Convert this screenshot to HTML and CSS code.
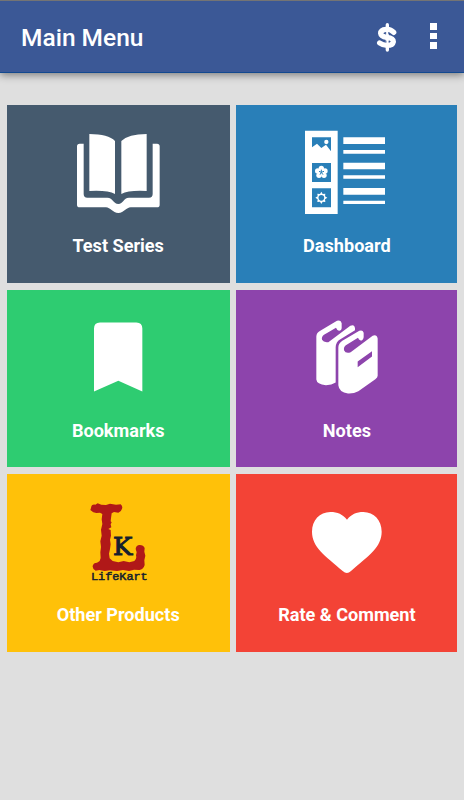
FILE: index.html
```html
<!DOCTYPE html>
<html lang="en">
<head>
    <meta charset="UTF-8">
    <meta name="viewport" content="width=device-width, initial-scale=1.0">
    <title>Main Menu</title>
    <link rel="stylesheet" href="styles.css">
</head>
<body>
    <header class="toolbar">
        <h1>Main Menu</h1>
        <button class="dollar" aria-label="Purchase">
            <svg width="22" height="32" viewBox="0 0 66 96">
                <path d="M53 31Q44 21 31 22Q14 23 14 34Q15 44 32 46Q52 48 52 59Q50 70 33 70Q20 70 11 63" fill="none" stroke="#fff" stroke-width="16" stroke-linecap="round"/>
                <path d="M34 8V84" stroke="#fff" stroke-width="10" stroke-linecap="round"/>
                <path d="M29 30v7M38 30v7M30 56v6M39 56v6" stroke="#3b5896" stroke-width="2.5"/>
            </svg>
        </button>
        <button class="more" aria-label="More options">
            <span></span>
            <span></span>
            <span></span>
        </button>
    </header>

    <main class="menu">
        <a class="tile tests">
            <svg class="icon" viewBox="-6 0 360 300">
                <path d="M88 42Q145 42 165 63V222Q143 210 88 213Z"/>
                <path d="M260 42Q205 42 184 63V222Q206 210 260 213Z"/>
                <path d="M71 71H59Q51 71 51 79V254Q51 262 59 262H138C151 262 158 279 175 279S199 262 212 262H291Q299 262 299 254V79Q299 71 291 71H278V222Q278 233 267 233H207C190 233 190 252 175 252S159 233 142 233H82Q71 233 71 222Z"/>
            </svg>
            <span>Test Series</span>
        </a>
        <a class="tile dashboard">
            <svg class="icon" viewBox="-9 0 360 300">
                <path d="M45 32H143V282H45ZM66 52V82L81 71L94 84L108 74L123 94V52ZM66 129V186H123V129ZM66 205V262H123V205Z" fill-rule="evenodd"/>
                <circle cx="109" cy="66" r="6.5"/>
                <path d="M160 52H285V72H160ZM160 90H285V101H160ZM160 128H285V148H160ZM160 166H285V176H160ZM160 204H285V224H160ZM160 242H285V252H160Z"/>
                <g>
                    <circle cx="94" cy="145" r="8"/>
                    <circle cx="83" cy="153" r="8"/>
                    <circle cx="105" cy="153" r="8"/>
                    <circle cx="87" cy="166" r="8"/>
                    <circle cx="102" cy="166" r="8"/>
                    <circle cx="94" cy="156" r="9"/>
                    <path d="M94 157V149M94 157L87 154M94 157L102 154M94 157L90 164M94 157L99 164" stroke="#297fb8" stroke-width="3"/>
                </g>
                <path d="M94 215L98 222L106 221L105 229L112 233L105 238L106 246L98 245L94 252L90 245L82 246L83 238L76 233L83 229L82 221L90 222Z"/>
                <circle cx="94" cy="233.5" r="8.5" fill="#297fb8"/>
            </svg>
            <span>Dashboard</span>
        </a>
        <a class="tile bookmarks">
            <svg class="icon" viewBox="-6 -16.5 360 300">
                <path d="M102 54Q102 36 120 36H229Q247 36 247 54V243L175 211L102 243Z"/>
            </svg>
            <span>Bookmarks</span>
        </a>
        <a class="tile notes">
            <svg class="icon" viewBox="-9 -16.5 360 300">
                <path d="M79 78Q79 66 92 60L141 31Q153 27 155 38V53Q154 62 147 61Q141 60 138 52L102 73Q94 79 96 88Q101 97 115 95L181 46Q193 40 195 53V59L150 87Q138 94 137 110V216Q125 224 108 224Q80 221 79 207Z"/>
                <path d="M145 111Q145 99 157 91L208 61Q218 57 221 67V80Q219 90 212 90Q206 89 204 82L170 103Q160 109 162 119Q167 130 182 125L248 76Q260 71 263 84V196Q263 201 256 206L205 242Q191 250 174 249Q147 245 145 224ZM203 153V170L246 138V122Z" fill-rule="evenodd"/>
            </svg>
            <span>Notes</span>
        </a>
        <a class="tile products">
            <svg class="icon" viewBox="24 -3 360 300">
                <path class="brand-l" d="M123 54Q124 42 136 44L143 40L154 44L168 45L180 41L198 44L212 43Q219 49 216 56Q214 65 205 68L192 66L185 70L183 85L182 94L185 97L182 103L184 112L175 117L182 120L183 137L180 149L182 163L180 177L177 191L179 205L188 213L205 217L221 213L238 217L253 213Q261 207 258 196L260 187L257 177Q258 167 267 165Q280 164 284 174L283 185L286 197L283 211L284 225Q280 238 268 240L252 239L237 243L219 240L201 243L180 241L164 243L148 240L137 242Q127 237 128 228Q130 218 141 218L149 213L152 204L151 187L153 171L151 154L155 137L153 119L157 102L155 88L157 72L150 68L139 69L130 67L121 60Z"/>
                <text class="brand-k" x="189" y="196" textLength="58" lengthAdjust="spacingAndGlyphs">K</text>
                <text class="brand-name" x="123" y="271" textLength="170" lengthAdjust="spacingAndGlyphs">LifeKart</text>
            </svg>
            <span>Other Products</span>
        </a>
        <a class="tile rate">
            <svg class="icon" viewBox="51 -33 360 300">
                <path d="M231 59C218 43 203 36 181 36C149 36 126 61 126 95C126 142 165 166 218 213Q231 225 243 213C296 166 335 142 335 95C335 61 312 36 280 36C259 36 244 43 231 59Z"/>
            </svg>
            <span>Rate &amp; Comment</span>
        </a>
    </main>
</body>
</html>
```
FILE: styles.css
```css
* {
    box-sizing: border-box;
}
body {
    margin: 0;
    min-height: 100vh;
    background-color: #dfdfdf;
    font-family: Roboto, sans-serif;
    color: #fff;
}
.toolbar {
    display: flex;
    align-items: center;
    height: 73px;
    padding: 2px 27px 0 21px;
    background-color: #3b5896;
    border-top: 1px solid #747474;
    border-bottom: 1px solid #13498f;
    box-shadow: 0 2px 8px rgba(0, 0, 0, 0.45);
}
.toolbar h1 {
    flex: 1;
    margin: 0;
    font-size: 24.5px;
    font-weight: 500;
    line-height: 32px;
}
.toolbar button {
    padding: 0;
    border: none;
    background: none;
}
.dollar {
    height: 32px;
    margin-right: 32px;
}
.dollar svg {
    display: block;
}
.more {
    display: flex;
    flex-direction: column;
    gap: 3px;
    margin-top: -3px;
}
.more span {
    width: 7px;
    height: 7px;
    background-color: #fff;
}
.more span:nth-child(2) {
    height: 6px;
}
.menu {
    display: grid;
    grid-template-columns: 223px 221px;
    grid-auto-rows: 177.7px;
    gap: 6.7px;
    padding: 32.3px 6.7px;
}
.tile {
    display: flex;
    flex-direction: column;
    align-items: center;
    padding-top: 15px;
    font-size: 18.1px;
    font-weight: 700;
    line-height: 24px;
}
.icon {
    width: 120px;
    height: 100px;
    margin-bottom: 14px;
    fill: #fff;
}
.tests {
    background-color: #455a6e;
}
.dashboard {
    background-color: #297fb8;
}
.bookmarks {
    background-color: #2ecc71;
}
.notes {
    background-color: #8d44ac;
}
.products {
    background-color: #ffc109;
}
.rate {
    background-color: #f34336;
}
.brand-l {
    fill: #b01818;
}
.brand-k,
.brand-name {
    fill: #14202e;
}
.brand-k {
    font-family: "DejaVu Serif", serif;
    font-size: 72px;
    font-weight: 400;
    stroke: #14202e;
    stroke-width: 3;
}
.brand-name {
    font-family: "Liberation Mono", monospace;
    font-size: 34px;
    font-weight: 400;
    stroke: #14202e;
    stroke-width: 1.5;
}
```
